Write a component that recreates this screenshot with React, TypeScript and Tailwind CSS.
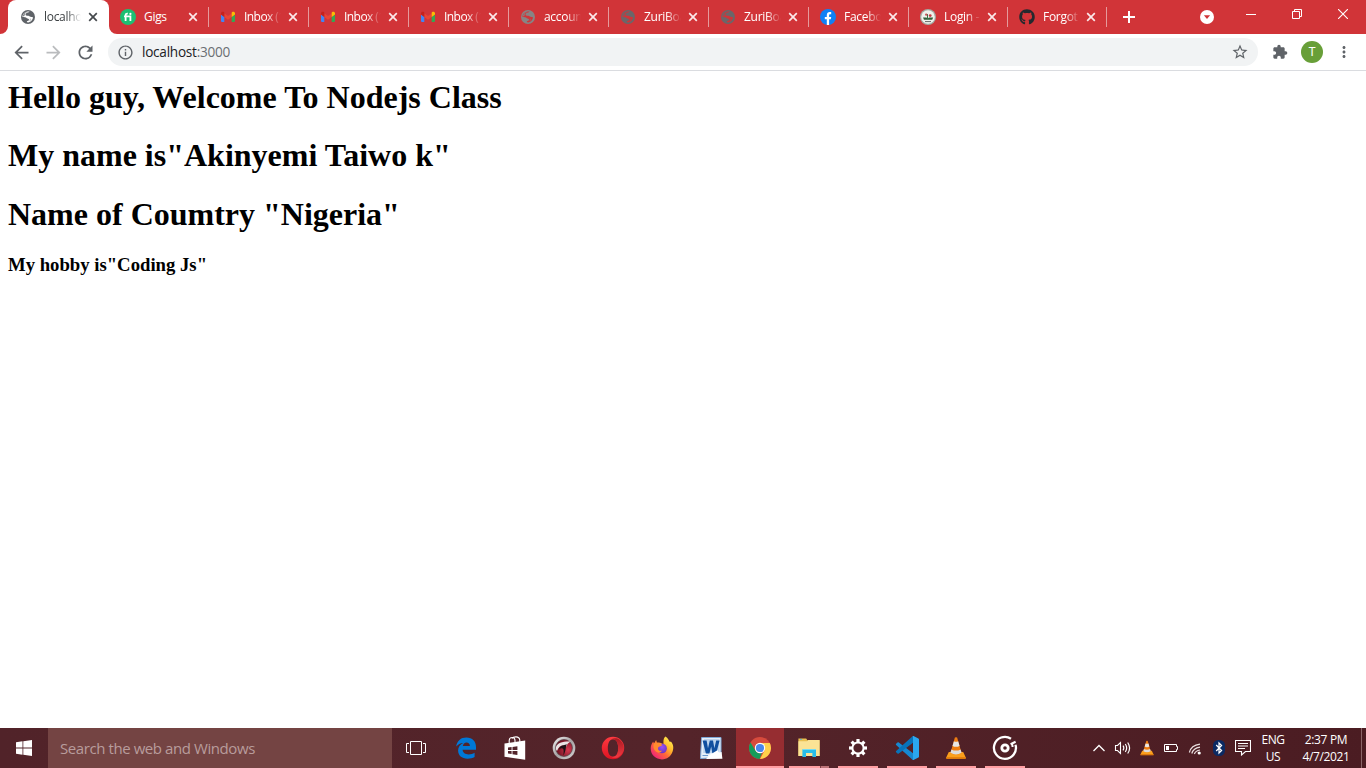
import React from "react";
import {
  MdArrowBack,
  MdArrowForward,
  MdRefresh,
  MdInfoOutline,
  MdStarBorder,
  MdExtension,
  MdMoreVert,
} from "react-icons/md";
import { FaGithub } from "react-icons/fa";

function Globe({ color, land }: { color: string; land: string }) {
  return (
    <svg width="16" height="16" viewBox="0 0 16 16">
      <circle cx="8" cy="8" r="7" fill={color} />
      <path
        d="M9.6 2.6C8.8 3.9 6.6 3.2 5.6 4.9C5 6.6 6.8 6.8 8.2 6.8C9.8 6.9 9.8 8.2 11.6 8.1C13 8.1 13.2 8.6 12.8 9.6C12 11.8 10.3 13.2 8.1 13.5C6.9 13.5 6.6 12.9 7 12.3C7.8 11.6 9 11.9 9.1 10.8C9.1 9.5 7.6 9.9 6.8 9.2C6 8.2 4.2 8.3 2.5 8.1C2.3 5 5.2 2.2 9.6 2.6Z"
        fill={land}
      />
      <path d="M3 7.3C3.2 4.8 5.2 2.9 7.8 2.7C6.4 3.4 4.6 4 4.6 5.7C4.5 6.9 4 7.4 3 7.3Z" fill={color} />
      <path d="M9.8 9.6C11.6 9.4 11.6 10.6 10.6 11.7C9.8 12.4 9 12.4 9.4 11.6C9.8 10.8 10 10.2 9.8 9.6Z" fill={color} opacity="0.35" />
    </svg>
  );
}

function Gmail() {
  return (
    <svg width="16" height="16" viewBox="0 0 16 16">
      <path d="M1 5.5L4.3 8V13H2.1A1.1 1.1 0 0 1 1 12Z" fill="#4285f4" />
      <path d="M15 5.5L11.7 8V13H13.9A1.1 1.1 0 0 0 15 12Z" fill="#34a853" />
      <path d="M4.3 4.2L8 7L11.7 4.2V8L8 10.8L4.3 8Z" fill="#ea4335" />
      <path d="M1 4.3C1 2.7 2.8 2.3 3.8 3.1L4.3 3.5V8L1 5.6Z" fill="#c5221f" />
      <path d="M15 4.3C15 2.7 13.2 2.3 12.2 3.1L11.7 3.5V8L15 5.6Z" fill="#fbbc04" />
    </svg>
  );
}

function Fiverr() {
  return (
    <svg width="16" height="16" viewBox="0 0 16 16">
      <circle cx="8" cy="8" r="8" fill="#1dbf73" />
      <path d="M5.6 12V6.4C5.6 5 6.2 4.5 7.8 4.7M4 7.3H10.4V12" fill="none" stroke="#fff" strokeWidth="1.8" />
      <circle cx="10.4" cy="4.9" r="1.1" fill="#fff" />
    </svg>
  );
}

function Facebook() {
  return (
    <svg width="16" height="16" viewBox="0 0 16 16">
      <circle cx="8" cy="8" r="8" fill="#1080f5" />
      <path d="M6.8 16V10.3H4.8V8H6.8V6.2C6.8 4.1 8 3.1 9.7 3.1C10.5 3.1 11.2 3.2 11.2 3.2V5.2H10.2C9.3 5.2 9.1 5.7 9.1 6.3V8H11.2L10.8 10.3H9.1V16Z" fill="#fff" />
    </svg>
  );
}

function Crest() {
  return (
    <svg width="16" height="16" viewBox="0 0 16 16">
      <circle cx="8" cy="8" r="8" fill="#a3aba4" />
      <circle cx="8" cy="8" r="6.8" fill="#f0f1ec" />
      <path d="M3 8.6H6.5L7.5 9.8L9 8.6H13.2L12.2 10.8H4Z" fill="#2f5f3a" />
      <path d="M7.5 10V5" stroke="#397343" strokeWidth="1" fill="none" />
      <circle cx="6.2" cy="5.6" r="1.2" fill="#c4545a" />
      <circle cx="10.2" cy="6.6" r="1.4" fill="#c43a43" />
      <path d="M5 12.6H11" stroke="#666" strokeWidth="1" />
    </svg>
  );
}

function CloseGlyph({ color }: { color: string }) {
  return (
    <svg width="10" height="10" viewBox="0 0 10 10">
      <path d="M1.2 1.2L8.8 8.8M8.8 1.2L1.2 8.8" stroke={color} strokeWidth="1.7" />
    </svg>
  );
}

const tabs = [
  { title: "Gigs", icon: <Fiverr />, narrow: false },
  { title: "Inbox (1", icon: <Gmail />, narrow: false },
  { title: "Inbox (1", icon: <Gmail />, narrow: false },
  { title: "Inbox (1", icon: <Gmail />, narrow: false },
  { title: "account", icon: <Globe color="#878485" land="#d13438" />, narrow: false },
  { title: "ZuriBoar", icon: <Globe color="#6b6669" land="#d13438" />, narrow: false },
  { title: "ZuriBoar", icon: <Globe color="#6b6669" land="#d13438" />, narrow: false },
  { title: "Facebook", icon: <Facebook />, narrow: false },
  { title: "Login -", icon: <Crest />, narrow: true },
  { title: "Forgot", icon: <FaGithub size={16} color="#24292e" />, narrow: true },
];

const fade = "[mask-image:linear-gradient(to_right,black_60%,transparent_100%)]";

function TabStrip() {
  return (
    <div className="flex h-[34px] bg-[#d13438] pl-2">
      <div className="relative -mr-px flex h-[34px] w-[101px] shrink-0 items-center rounded-t-lg bg-white pl-3">
        <svg className="absolute bottom-0 -left-2" width="8" height="8" viewBox="0 0 8 8">
          <path d="M8 0V8H0A8 8 0 0 0 8 0Z" fill="#fff" />
        </svg>
        <svg className="absolute -right-2 bottom-0" width="8" height="8" viewBox="0 0 8 8">
          <path d="M0 0V8H8A8 8 0 0 1 0 0Z" fill="#fff" />
        </svg>
        <Globe color="#5f6368" land="#ffffff" />
        <div className={"ml-2 w-[37px] overflow-hidden text-[12px] tracking-[-0.3px] whitespace-nowrap text-[#3c4043] " + fade}>localhost</div>
        <div className="ml-[7px] flex">
          <CloseGlyph color="#45494d" />
        </div>
      </div>
      {tabs.map((t, i) => (
        <div
          key={i}
          className={(t.narrow ? "w-[99px]" : "w-[100px]") + " flex h-[34px] shrink-0 items-center pl-3"}
        >
          {t.icon}
          <div
            className={
              "ml-2 w-[37px] overflow-hidden text-[12px] whitespace-pre text-white " +
              (t.title.startsWith("Inbox") ? "tracking-[-0.55px] " : "tracking-[-0.3px] ") +
              (i === 0 ? "" : fade)
            }
          >
            {t.title}
          </div>
          <div className={(t.narrow ? "ml-[6px]" : "ml-[7px]") + " flex"}>
            <CloseGlyph color="#fbe9ea" />
          </div>
          <div className="-mr-px ml-auto h-5 w-px bg-[#e59a9c]" />
        </div>
      ))}
      <div className="ml-[17px] flex items-center">
        <svg width="12" height="12" viewBox="0 0 12 12">
          <path d="M6 0V12M0 6H12" stroke="#fff" strokeWidth="2" />
        </svg>
      </div>
      <div className="ml-auto flex">
        <div className="mr-[14px] flex items-center">
          <svg width="14" height="14" viewBox="0 0 14 14">
            <circle cx="7" cy="7" r="7" fill="#fff" />
            <path d="M3.9 5.3H10.1L7 9Z" fill="#d13438" />
          </svg>
        </div>
        <div className="flex h-[28px] w-[46px] items-center justify-center">
          <svg width="10" height="10" viewBox="0 0 10 10">
            <path d="M0 5.5H10" stroke="#fff" />
          </svg>
        </div>
        <div className="flex h-[28px] w-[46px] items-center justify-center">
          <svg width="10" height="10" viewBox="0 0 10 10">
            <path d="M0.5 2.5H7.5V9.5H0.5ZM2.5 2.5V0.5H9.5V7.5H7.5" fill="none" stroke="#fff" />
          </svg>
        </div>
        <div className="flex h-[28px] w-[46px] items-center justify-center">
          <svg width="10" height="10" viewBox="0 0 10 10">
            <path d="M0 0L10 10M10 0L0 10" stroke="#fff" strokeWidth="1.1" />
          </svg>
        </div>
      </div>
    </div>
  );
}

function Toolbar() {
  return (
    <div className="flex h-[37px] items-start border-b border-[#dadce0] bg-white pt-1">
      <div className="flex h-7 w-[108px] items-center gap-[11px] pl-[11px] text-[#5f6368]">
        <MdArrowBack size={21} />
        <MdArrowForward size={21} color="#babcbe" />
        <MdRefresh size={21} />
      </div>
      <div className="flex h-7 w-[1150px] items-center rounded-full bg-[#f1f3f4] pr-[9px] pl-[9px]">
        <MdInfoOutline size={17} color="#5f6368" />
        <div className="ml-2 text-[13.6px] tracking-[-0.25px] text-[#202124]">
          localhost<span className="text-[#6b6f73]">:3000</span>
        </div>
        <div className="ml-auto">
          <MdStarBorder size={18} color="#5f6368" />
        </div>
      </div>
      <div className="flex h-7 flex-1 items-center pl-[14px]">
        <MdExtension size={16} color="#5f6368" />
        <div className="ml-[13px] flex h-[22px] w-[22px] items-center justify-center rounded-full bg-[#689f38] font-['Roboto',sans-serif] text-[12px] text-white">T</div>
        <div className="ml-3">
          <MdMoreVert size={18} color="#5f6368" />
        </div>
      </div>
    </div>
  );
}

function TaskViewIcon() {
  return (
    <svg width="20" height="14" viewBox="0 0 20 14">
      <path d="M4.5 0.5H15.5V13.5H4.5ZM3 2.5H0.5V11.5H3M17 2.5H19.5V11.5H17" fill="none" stroke="#fff" />
    </svg>
  );
}

function EdgeIcon() {
  return (
    <svg width="20" height="22" viewBox="0 0 20 22">
      <path
        d="M0.2 9.6C1 4 4.8 0.6 10.4 0.6C16.4 0.6 20 4.6 20 10V12.8H6.6C6.8 16 9.4 17.4 12.6 17.4C15 17.4 16.9 16.8 18.6 15.8V20.1C16.7 21.1 14.3 21.7 11.6 21.7C5.7 21.7 2.1 18.5 2.1 13.6C2.1 10.2 4 7.3 7.3 5.9C4.4 6.1 1.8 7.2 0.2 9.6ZM6.8 9.1H13.9C13.8 6.7 12.6 5.4 10.6 5.4C8.6 5.4 7.1 6.8 6.8 9.1Z"
        fill="#0078d7"
      />
    </svg>
  );
}

function StoreIcon() {
  return (
    <svg width="22" height="24" viewBox="0 0 22 24">
      <path d="M0.5 7.5L21.2 4.5V23.7L0.5 20.8Z" fill="#fff" />
      <path d="M5.2 7V4.5C5.2 2.6 6.6 1.5 8.2 1.5C10 1.5 11 2.6 11 4.5V6.5M8 2.5C9 0.7 15.2 -0.6 15.8 4V6" fill="none" stroke="#fff" strokeWidth="1.1" />
      <path d="M4 11.6L7.6 11.1V14H4ZM8.5 11L13.4 10.2V14H8.5ZM4 15H7.6V18L4 17.5ZM8.5 15H13.4V18.9L8.5 18.2Z" fill="#52232a" />
    </svg>
  );
}

function DragonIcon() {
  return (
    <svg width="24" height="24" viewBox="0 0 24 24">
      <defs>
        <linearGradient id="silver" x1="0" y1="0" x2="1" y2="1">
          <stop offset="0" stopColor="#f8f8f8" />
          <stop offset="0.5" stopColor="#a5a2a3" />
          <stop offset="1" stopColor="#d8d6d6" />
        </linearGradient>
        <radialGradient id="ruby" cx="0.75" cy="0.6" r="0.7">
          <stop offset="0" stopColor="#d63a50" />
          <stop offset="1" stopColor="#6e1020" />
        </radialGradient>
      </defs>
      <circle cx="12" cy="12" r="11.3" fill="url(#silver)" />
      <circle cx="12" cy="12" r="8.4" fill="url(#ruby)" stroke="#55454a" strokeWidth="0.8" />
      <path d="M4 11C5.6 7 10 5.4 18.6 5.6C16.6 6.6 15 8.4 14.4 10.4L11 9.6C8.6 9.6 6.4 11.4 5 15C3.8 13.8 3.6 12.4 4 11Z" fill="#e9e5e6" />
      <path d="M10.4 9.6L15 8.2C13.2 11 14.4 14.8 11.4 19.2C11.6 15.6 12.4 12 9.4 12.2C8.2 12.3 7.6 13 6.8 14C7.4 11.6 8.6 10.2 10.4 9.6Z" fill="#1f1216" />
    </svg>
  );
}

function OperaIcon() {
  return (
    <svg width="24" height="24" viewBox="0 0 24 24">
      <defs>
        <linearGradient id="opera" x1="0" y1="0" x2="0" y2="1">
          <stop offset="0" stopColor="#ff3a40" />
          <stop offset="1" stopColor="#dc1322" />
        </linearGradient>
        <linearGradient id="operaShade" x1="0" y1="0" x2="0" y2="1">
          <stop offset="0" stopColor="#a81a22" />
          <stop offset="1" stopColor="#f23a42" />
        </linearGradient>
      </defs>
      <path fillRule="evenodd" d="M12 0.8A11.2 11.2 0 1 0 12 23.2A11.2 11.2 0 1 0 12 0.8ZM12 3.2C15.6 3.2 17.2 7.2 17.2 12C17.2 16.8 15.6 20.8 12 20.8C8.6 20.8 6.8 16.8 6.8 12C6.8 7.2 8.6 3.2 12 3.2Z" fill="url(#opera)" />
      <path d="M8.5 4.6C10.5 2.5 13.5 1.6 16.5 2.6C24.8 6.6 24.8 17.4 16.5 21.4C13.5 22.4 10.5 21.5 8.5 19.4C10 20.7 11.2 20.8 12 20.8C15.6 20.8 17.2 16.8 17.2 12C17.2 7.2 15.6 3.2 12 3.2C10.8 3.2 9.5 3.7 8.5 4.6Z" fill="url(#operaShade)" />
    </svg>
  );
}

function FirefoxIcon() {
  return (
    <svg width="24" height="24" viewBox="0 0 24 24">
      <defs>
        <linearGradient id="fox" x1="0.9" y1="0.1" x2="0.15" y2="0.9">
          <stop offset="0" stopColor="#fff04f" />
          <stop offset="0.35" stopColor="#ffb52b" />
          <stop offset="0.6" stopColor="#ff6a36" />
          <stop offset="1" stopColor="#ee2379" />
        </linearGradient>
        <radialGradient id="orb" cx="0.5" cy="0.35" r="0.65">
          <stop offset="0" stopColor="#9a50f7" />
          <stop offset="1" stopColor="#6b35bd" />
        </radialGradient>
      </defs>
      <path d="M15.4 0.5C18 2.4 19 4 19.4 5.6C20.6 6.3 20.7 5.8 20.7 5.2C23.6 8.2 23.8 12 22.6 15.6C21 20.6 16.8 23.4 12 23.4C5.8 23.4 0.7 19 0.7 12.6C0.7 9.5 1.7 7.5 3.2 5.8L4 7.4L6.1 3.9L7 6.7C10 6.2 12.3 7.4 13.4 8.6C13.8 6.6 12.6 3 15.4 0.5Z" fill="url(#fox)" />
      <circle cx="12.1" cy="12.5" r="4.8" fill="url(#orb)" />
      <path d="M4 7.2C7.4 5.8 10.8 7.2 12.4 9.1C10.8 10.3 10.2 10.4 8.5 10.9C7.2 13.3 8.8 15.2 12 14.8C10.9 16.8 8 17.5 5.9 15.6C3.4 13.3 2.8 10 4 7.2Z" fill="#ff8b2e" />
    </svg>
  );
}

function WordIcon() {
  return (
    <svg width="24" height="24" viewBox="0 0 24 24">
      <path d="M2.6 1.5H22V21.5L1.5 22.5Z" fill="#e7eff8" stroke="#7fa9d8" />
      <path d="M5 3H20.5V17H4.2Z" fill="#bcd4ee" />
      <path d="M3.6 4.6H7.6L9 12.2L10.8 4.6H14L15.4 12.2L17.2 4.6H20.6L17.2 17.4H13.4L12.2 10.6L10.4 17.4H6.9Z" fill="#114f9f" />
      <path d="M11 18.8L18.4 14.2L20 16.4L22.6 16L23.4 22.8L7 23Z" fill="#fff" />
      <path d="M3.5 19.5H9" stroke="#6898cf" />
    </svg>
  );
}

function ChromeIcon() {
  return (
    <svg width="22" height="22" viewBox="0 0 22 22">
      <circle cx="11" cy="11" r="11" fill="#d74b3d" />
      <path d="M11 6H20.8A11 11 0 0 1 11 22L15.6 13.5Z" fill="#ffd04b" />
      <path d="M1.5 5.4L6.4 13.6C7.6 15.7 9.6 16.5 12.8 16L10.5 22A11 11 0 0 1 1.5 5.4Z" fill="#159b5a" />
      <circle cx="11" cy="11" r="5.2" fill="#fff" />
      <circle cx="11" cy="11" r="4.1" fill="#4a86ed" />
    </svg>
  );
}

function ExplorerIcon() {
  return (
    <svg width="24" height="24" viewBox="0 0 24 24">
      <path d="M1.4 4V2.6H9.2L10.3 4.2H22.6V20H1.4Z" fill="#e9bf50" />
      <path d="M2.3 5.3H10L11.2 3.9H22.6V20H1.4V5.3Z" fill="#fbe395" />
      <path d="M3.2 3.4H4.8" stroke="#47b5e8" />
      <path d="M5.4 21V13.6H19V21H15.4V17.1H9V21Z" fill="#29bdea" />
      <path d="M5.4 13.5H19" stroke="#74dcf3" />
    </svg>
  );
}

const teeth = [0, 45, 90, 135, 180, 225, 270, 315];

function GearIcon() {
  return (
    <svg width="20" height="20" viewBox="0 0 20 20">
      <circle cx="10" cy="10" r="5.6" fill="none" stroke="#fff" strokeWidth="2" />
      {teeth.map((a) => (
        <path key={a} d="M8.4 1H11.6V4.4H8.4Z" fill="#fff" transform={`rotate(${a} 10 10)`} />
      ))}
    </svg>
  );
}

function CodeIcon() {
  return (
    <svg width="24" height="24" viewBox="0 0 24 24">
      <path d="M1.1 7.7L2.5 6.5C2.9 6.2 3.4 6.2 3.8 6.5L19 18V23.8C18.2 24 17.5 23.8 17 23.2L1.1 8.9C0.7 8.6 0.7 8.1 1.1 7.7Z" fill="#1688d1" />
      <path d="M1.1 16.3L2.5 17.5C2.9 17.8 3.4 17.8 3.8 17.5L19 6V0.2C18.2 0 17.5 0.2 17 0.8L1.1 15.1C0.7 15.4 0.7 15.9 1.1 16.3Z" fill="#0873ba" />
      <path d="M17 23.3C17.8 24 18.4 24 19 23.7L23.4 21.6C23.8 21.4 24 21 24 20.5V3.5C24 3 23.8 2.6 23.4 2.4L19 0.3C18.4 0 17.8 0 17 0.7C17.8 0.2 18 0.8 18 1.5V22.5C18 23.2 17.8 23.8 17 23.3Z" fill="#2ba7ef" />
    </svg>
  );
}

function ConeIcon({ size }: { size: number }) {
  return (
    <svg width={size} height={size} viewBox="0 0 24 24">
      <path d="M4.8 16H19.2L22 22H2Z" fill="#fb9f1c" />
      <path d="M2.2 21.2H21.8V23H2.2Z" fill="#e07a0c" />
      <path d="M10.9 1.6Q12 0.8 13.1 1.6L17.6 17Q12 20 6.4 17Z" fill="#ef7d12" />
      <path d="M9.9 5.2Q12 6.2 14.2 5.2L15.6 9.9Q12 11.6 8.5 9.9Z" fill="#e9e7e5" />
      <path d="M7.4 13.4Q12 15.8 16.6 13.4L17.6 16.8Q12 20 6.4 16.8Z" fill="#dedcdb" />
    </svg>
  );
}

function GrooveIcon() {
  return (
    <svg width="26" height="26" viewBox="0 0 26 26">
      <path d="M19 3.7A11 11 0 1 0 23.5 9.8" fill="none" stroke="#fff" strokeWidth="2.3" />
      <path d="M18.6 9.2L23.6 6.8" stroke="#fff" strokeWidth="2.2" />
      <path d="M19.8 8.6A8 8 0 0 1 20.6 12" fill="none" stroke="#fff" strokeWidth="2" />
      <circle cx="13" cy="13" r="3.2" fill="none" stroke="#fff" strokeWidth="2.8" />
    </svg>
  );
}

const pinned = [
  { name: "edge", icon: <EdgeIcon />, state: "pinned" },
  { name: "store", icon: <StoreIcon />, state: "pinned" },
  { name: "dragon", icon: <DragonIcon />, state: "pinned" },
  { name: "opera", icon: <OperaIcon />, state: "pinned" },
  { name: "firefox", icon: <FirefoxIcon />, state: "pinned" },
  { name: "word", icon: <WordIcon />, state: "pinned" },
  { name: "chrome", icon: <ChromeIcon />, state: "active" },
  { name: "explorer", icon: <ExplorerIcon />, state: "multi" },
  { name: "settings", icon: <GearIcon />, state: "open" },
  { name: "code", icon: <CodeIcon />, state: "open" },
  { name: "vlc", icon: <ConeIcon size={24} />, state: "open" },
  { name: "groove", icon: <GrooveIcon />, state: "open" },
];

function TaskButton({ icon, state }: { icon: React.ReactNode; state: string }) {
  return (
    <div className={"flex h-10 w-12 flex-col items-center " + (state === "active" ? "bg-[#962d31]" : "")}>
      <div className="flex h-[38px] items-center justify-center pt-[2px]">{icon}</div>
      {state === "active" && <div className="h-[2px] w-full bg-[#ff9ea2]" />}
      {state === "open" && <div className="h-[2px] w-10 bg-[#ff9ea2]" />}
      {state === "multi" && (
        <div className="flex h-[2px] w-10">
          <div className="w-[31px] bg-[#ff9ea2]" />
          <div className="w-px bg-[#7c4146]" />
          <div className="flex-1 bg-[#bd7378]" />
        </div>
      )}
    </div>
  );
}

function Tray() {
  const cell = "flex h-10 w-6 items-center justify-center";
  return (
    <div className="ml-auto flex text-white">
      <div className={cell}>
        <svg width="12" height="8" viewBox="0 0 12 8">
          <path d="M0.5 7L6 1.5L11.5 7" fill="none" stroke="#fff" strokeWidth="1.3" />
        </svg>
      </div>
      <div className={cell}>
        <svg width="18" height="14" viewBox="0 0 18 14">
          <path d="M1.5 4.5H3.5L6.5 1.5V12.5L3.5 9.5H1.5Z" fill="none" stroke="#fff" strokeWidth="1.1" />
          <path d="M9 4.7Q10.6 7 9 9.3M11.3 3Q14 7 11.3 11M13.7 1.5Q17.5 7 13.7 12.5" fill="none" stroke="#fff" strokeWidth="1.2" />
        </svg>
      </div>
      <div className={cell}><ConeIcon size={16} /></div>
      <div className={cell}>
        <svg width="16" height="10" viewBox="0 0 16 10">
          <path d="M1.5 1.5H13.5V3.5H14.5V6.5H13.5V8.5H1.5Z" fill="none" stroke="#fff" />
          <path d="M3 3H6V7H3Z" fill="#fff" />
        </svg>
      </div>
      <div className={cell}>
        <svg width="14" height="14" viewBox="0 0 14 14">
          <path d="M1.4 11.5Q3 4.4 12 3.2M3.8 12.5Q5.2 7 12 6.1M6.4 13Q7.5 9.6 12 9" fill="none" stroke="#eadfe0" strokeWidth="1.2" />
          <circle cx="11.2" cy="12" r="1.6" fill="#fff" />
        </svg>
      </div>
      <div className={cell}>
        <svg width="12" height="16" viewBox="0 0 12 16">
          <rect width="12" height="16" rx="5.5" fill="#0b2a63" />
          <path d="M3.2 5L8.6 10.5L6 13V3L8.6 5.5L3.2 11" fill="none" stroke="#fff" strokeWidth="1.2" />
        </svg>
      </div>
      <div className={cell}>
        <svg width="16" height="16" viewBox="0 0 16 16">
          <path d="M0.5 0.5H15.5V11.5H10.5L6.5 15V11.5H0.5Z" fill="none" stroke="#fff" strokeWidth="1.1" />
          <path d="M3 3.5H13M3 6H13M3 8.5H10" stroke="#fff" strokeWidth="1.1" />
        </svg>
      </div>
      <div className="flex h-10 w-9 flex-col items-center justify-center text-[12px] leading-[17px] tracking-[-0.4px]">
        <div>ENG</div>
        <div>US</div>
      </div>
      <div className="flex h-10 w-[70px] flex-col items-center justify-center text-[12px] leading-[17px] tracking-[-0.35px]">
        <div>2:37 PM</div>
        <div>4/7/2021</div>
      </div>
      <div className="h-10 w-[5px] border-l border-[#8b6568]" />
    </div>
  );
}

function Taskbar() {
  return (
    <div className="flex h-10 bg-linear-to-r from-[#512329] via-[#54242a] to-[#4b1c22]">
      <div className="flex h-10 w-12 items-center justify-center">
        <svg width="16" height="16" viewBox="0 0 16 16">
          <path d="M0 2.2L6.5 1.3V7.5H0ZM7.3 1.2L16 0V7.5H7.3ZM0 8.4H6.5V14.7L0 13.8ZM7.3 8.4H16V16L7.3 14.8Z" fill="#fff" />
        </svg>
      </div>
      <div className="flex h-10 w-[344px] items-center bg-[#744443] pl-3 text-[15px] tracking-[-0.42px] text-[#b89c9c]">
        Search the web and Windows
      </div>
      <div className="flex h-10 w-12 items-center justify-center"><TaskViewIcon /></div>
      <div className="ml-[2px] flex gap-px">
        {pinned.map((p) => (
          <TaskButton key={p.name} icon={p.icon} state={p.state} />
        ))}
      </div>
      <Tray />
    </div>
  );
}

export default function App() {
  return (
    <div className="flex h-[768px] w-[1366px] flex-col overflow-hidden bg-white font-['Open_Sans','Noto_Sans',sans-serif]">
      <TabStrip />
      <Toolbar />
      <main className="flex-1 px-2 pt-2 font-['Liberation_Serif',serif] text-black">
        <h1 className="mb-[21.44px] text-[32px] leading-[37px] font-bold">Hello guy, Welcome To Nodejs Class</h1>
        <h1 className="mb-[21.44px] text-[32px] leading-[37px] font-bold">My name is"Akinyemi Taiwo k"</h1>
        <h1 className="mb-[21.44px] text-[32px] leading-[37px] font-bold">Name of Coumtry "Nigeria"</h1>
        <h3 className="text-[18.72px] leading-[21px] font-bold">My hobby is"Coding Js"</h3>
      </main>
      <Taskbar />
    </div>
  );
}
